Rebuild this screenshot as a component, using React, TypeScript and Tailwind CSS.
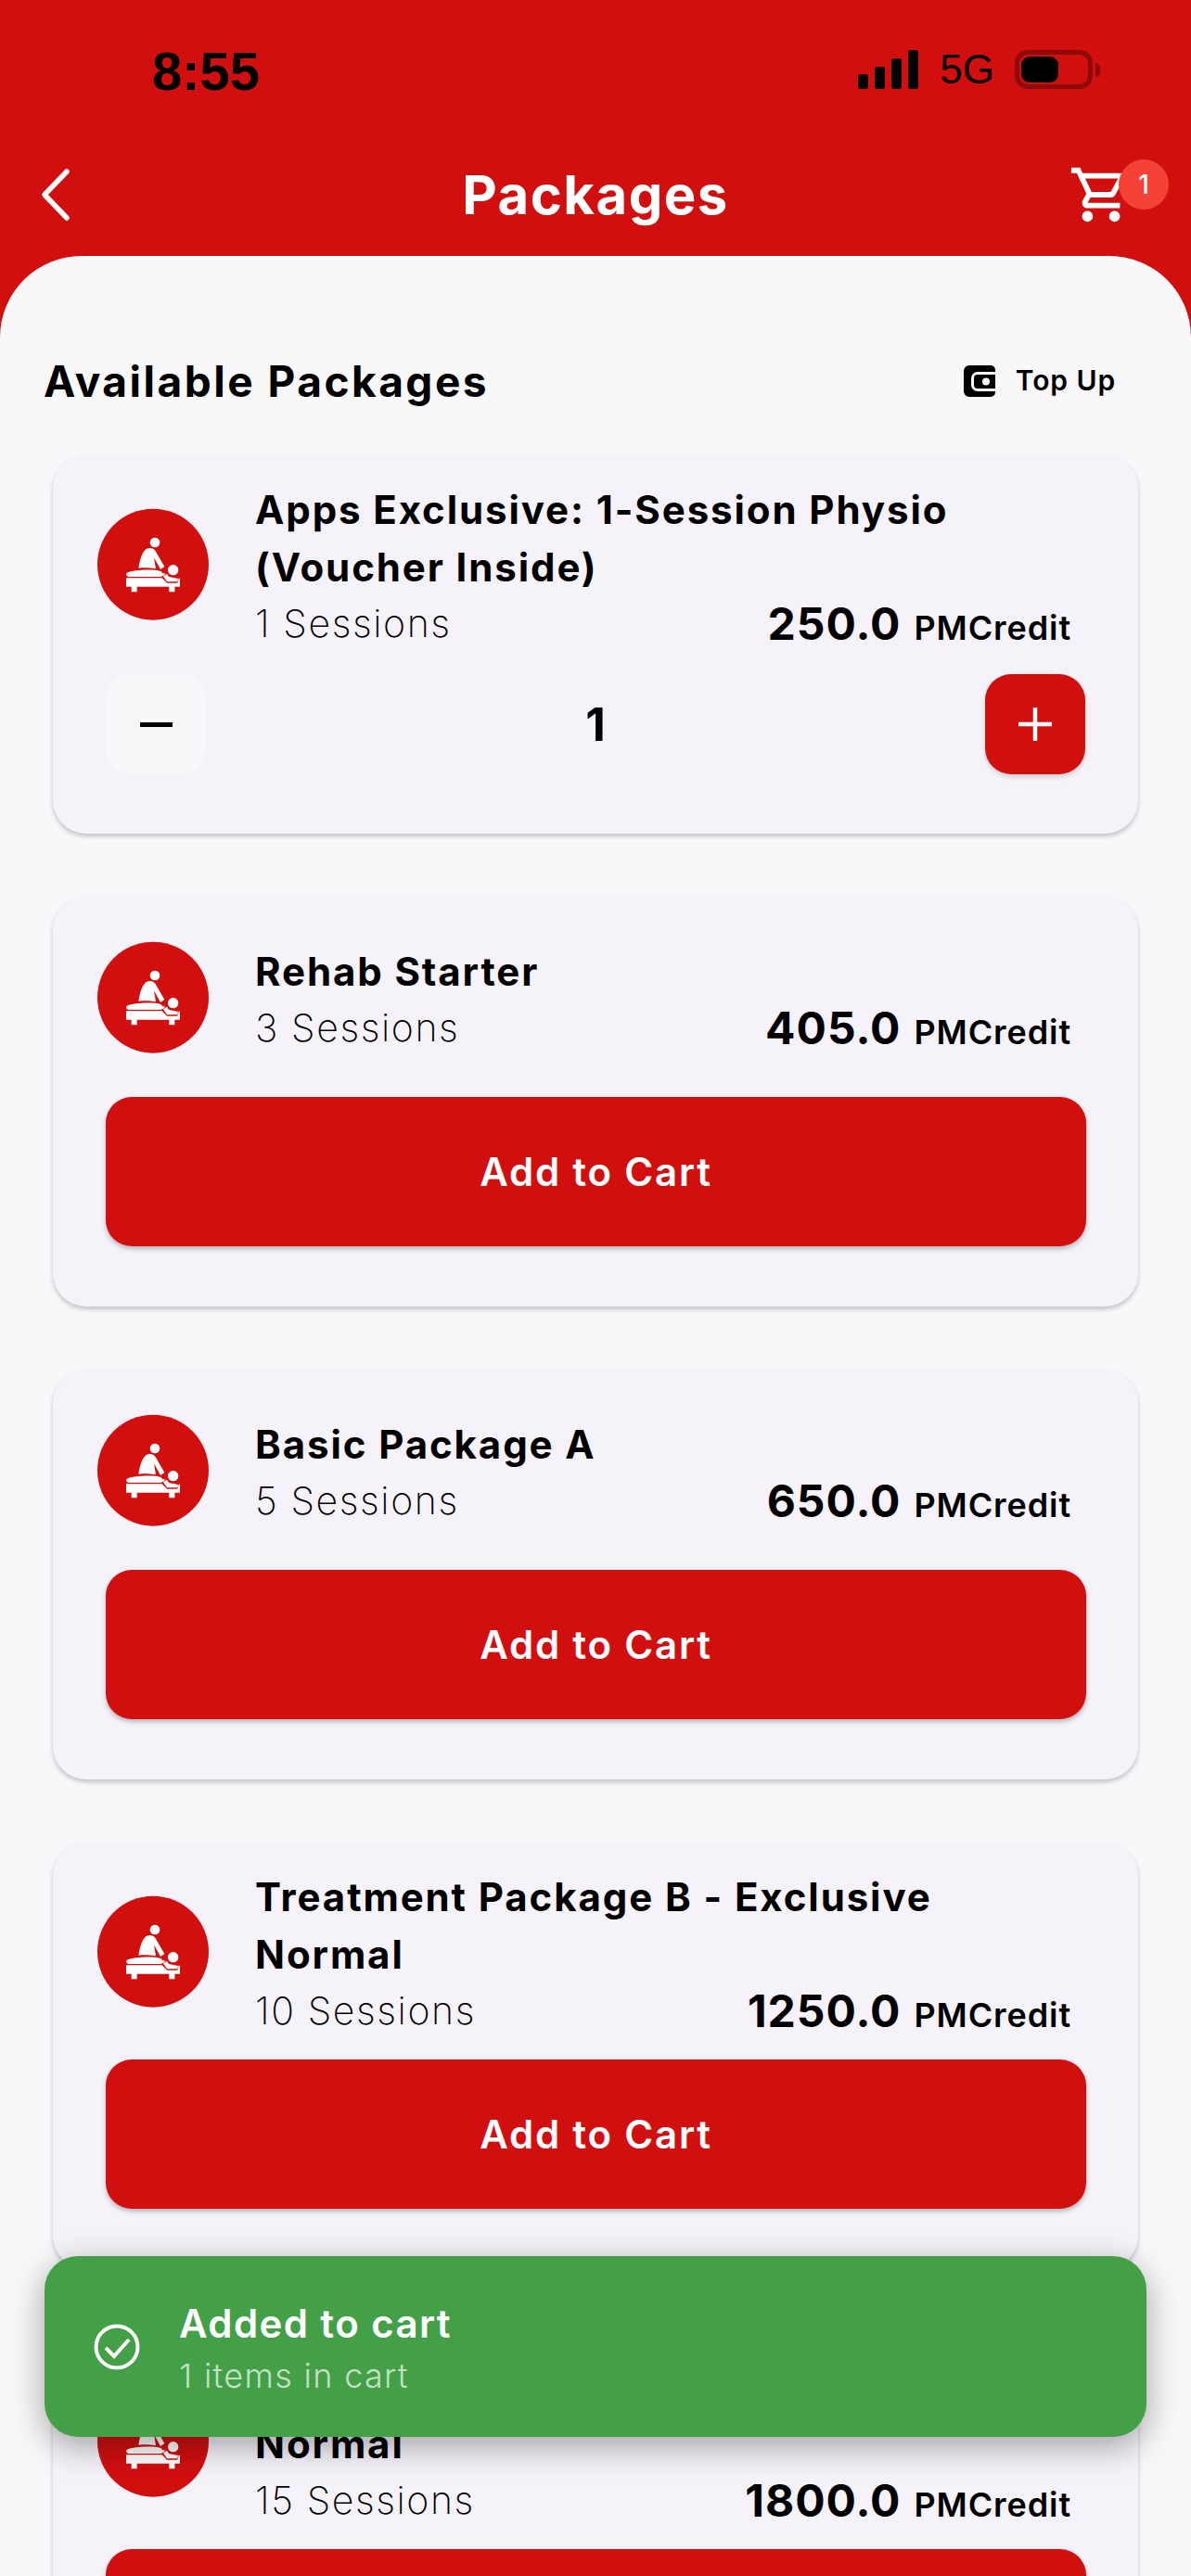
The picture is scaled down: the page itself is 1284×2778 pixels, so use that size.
import React from "react";

function MassageIcon() {
  return (
    <svg width="150" height="150" viewBox="0 0 450 450" className="-mx-[15px] -mt-[25px] -mb-[14px] shrink-0">
      <circle cx="225" cy="236" r="180" fill="#D20F0F" />
      <g fill="#fff">
        <circle cx="231" cy="165" r="16" />
        <path d="M178 248 C182 222 190 195 203 186 C215 181 226 183 233 193 L262 243 L249 252 L228 214 L234 250 C215 246 195 246 178 248Z" />
        <path d="M141 263 C160 255 200 252 238 255 L250 258 L258 266 L262 262 L262 270 L250 276 L150 276 C138 276 136 266 141 263Z" />
        <circle cx="290" cy="254" r="17" />
        <path d="M258 274 L270 266 L276 276 L306 282 L304 292 L270 292Z" />
        <path d="M138 280 L254 280 L270 296 L304 296 L308 281 L312 281 L312 308 L295 308 L295 325 L277 325 L277 308 L173 308 L173 325 L155 325 L155 308 L138 308Z" />
      </g>
    </svg>
  );
}

function Row({ title, sessions, price }: { title: React.ReactNode; sessions: string; price: string }) {
  return (
    <div className="flex items-center pl-[48px] pr-[72px]">
      <MassageIcon />
      <div className="ml-[50px] flex min-h-[164px] flex-1 flex-col justify-center">
        <div className="text-[42px] leading-[62px] font-bold tracking-[1.9px] text-black">{title}</div>
        <div className="flex h-[58px] items-center justify-between">
          <span className="text-[41px] leading-[58px] font-extralight tracking-[1.6px] text-black">{sessions}</span>
          <span className="flex items-baseline gap-[14px] pt-[5px] leading-[58px] text-black">
            <span className="text-[48px] font-bold tracking-[1px]">{price}</span>
            <span className="text-[36px] font-semibold tracking-[0.9px]">PMCredit</span>
          </span>
        </div>
      </div>
    </div>
  );
}

function AddButton() {
  return (
    <button className="mx-[57px] mt-[24px] flex h-[161px] w-[1057px] items-center justify-center rounded-[28px] bg-[#D20F0F] text-[42px] font-semibold tracking-[1.8px] text-white shadow-[0_3px_5px_rgba(0,0,0,0.25)]">
      Add to Cart
    </button>
  );
}

function Card({ title, sessions, price }: { title: React.ReactNode; sessions: string; price: string }) {
  return (
    <div className="mx-[57px] rounded-[36px] bg-[#F6F2FA] pt-[28px] pb-[65px] shadow-[0_3px_5px_rgba(0,0,0,0.22)]">
      <Row title={title} sessions={sessions} price={price} />
      <AddButton />
    </div>
  );
}

export default function App() {
  return (
    <div
      className="relative flex h-[2778px] w-[1284px] flex-col overflow-hidden bg-[#D20F0F]"
      style={{ fontFamily: 'Inter, "Liberation Sans", sans-serif' }}
    >
      {/* status bar */}
      <div className="flex h-[156px] items-start justify-between pt-[54px] pr-[106px] pl-[164px] text-black">
        <span className="text-[58px] leading-[46px] font-semibold" style={{ fontFamily: '"Liberation Sans", sans-serif' }}>
          8:55
        </span>
        <div className="flex items-center">
          <svg width="66" height="42" viewBox="0 0 66 42" fill="#000">
            <rect x="0" y="26" width="11" height="16" rx="3" />
            <rect x="18" y="18" width="11" height="24" rx="3" />
            <rect x="36" y="9" width="11" height="33" rx="3" />
            <rect x="54" y="0" width="11" height="42" rx="3" />
          </svg>
          <span className="mx-[22px] text-[44px] leading-[42px]" style={{ fontFamily: '"Liberation Sans", sans-serif' }}>
            5G
          </span>
          <div className="relative h-[42px] w-[84px] rounded-[14px] border-[5px] border-[#8F0A0A] p-[2px]">
            <div className="h-full w-[40px] rounded-[9px] bg-black" />
            <div className="absolute top-[9px] -right-[13px] h-[15px] w-[5px] rounded-r-full bg-[#8F0A0A]" />
          </div>
        </div>
      </div>

      {/* nav bar */}
      <div className="relative mb-[12px] flex h-[108px] items-center justify-between">
        <svg width="60" height="70" viewBox="0 0 60 70" fill="none" stroke="#fff" strokeWidth="5.5" strokeLinecap="round" strokeLinejoin="round" className="ml-[30px]">
          <path d="M42 10 L18 35 L42 60" />
        </svg>
        <span className="absolute left-0 w-[1284px] text-center text-[58px] font-bold tracking-[1.5px] text-white">Packages</span>
        <div className="relative mr-[62px] h-[70px] w-[70px]">
          <svg width="70" height="70" viewBox="0 0 24 24" fill="#fff">
            <path d="M15.55 13c.75 0 1.41-.41 1.75-1.03l3.58-6.49c.37-.66-.11-1.48-.87-1.48H5.21l-.94-2H1v2h2l3.6 7.59-1.35 2.44C4.52 15.37 5.48 17 7 17h12v-2H7l1.1-2h7.45zM6.16 6h12.15l-2.76 5H8.53L6.16 6zM7 18c-1.1 0-1.99.9-1.99 2S5.9 22 7 22s2-.9 2-2-.9-2-2-2zm10 0c-1.1 0-1.99.9-1.99 2s.89 2 1.99 2 2-.9 2-2-.9-2-2-2z" />
          </svg>
          <span className="absolute -top-[3px] left-[54px] flex h-[54px] w-[54px] items-center justify-center rounded-full bg-[#F44336] text-[28px] font-medium text-white">
            1
          </span>
        </div>
      </div>

      {/* panel */}
      <div className="flex-1 overflow-hidden rounded-t-[88px] bg-[#F8F8FB]">
        <div className="mt-[100px] flex h-[70px] items-center justify-between pr-[81px] pl-[47px]">
          <span className="text-[46px] font-bold tracking-[2.5px] text-black">Available Packages</span>
          <div className="flex items-center gap-[22px]">
            <svg width="34" height="34" viewBox="0 0 34 34">
              <path d="M6 0H29a5 5 0 0 1 5 5v2H15a7 7 0 0 0-7 7v7a7 7 0 0 0 7 7H34v1a5 5 0 0 1-5 5H6a6 6 0 0 1-6-6V6a6 6 0 0 1 6-6Z" fill="#000" />
              <path fillRule="evenodd" d="M15 10H34V25H15a4 4 0 0 1-4-4V14a4 4 0 0 1 4-4ZM24 13.500a4 4 0 1 0 0 8 4 4 0 0 0 0-8Z" fill="#000" />
            </svg>
            <span className="-mt-[2px] text-[30px] font-semibold tracking-[0.9px] text-black">Top Up</span>
          </div>
        </div>

        <div className="mt-[45px] flex flex-col gap-[68px]">
          {/* first card with stepper */}
          <div className="mx-[57px] h-[408px] rounded-[36px] bg-[#F6F2FA] pt-[28px] shadow-[0_3px_5px_rgba(0,0,0,0.22)]">
            <Row
              title={
                <>
                  Apps Exclusive: 1-Session Physio
                  <br />
                  (Voucher Inside)
                </>
              }
              sessions="1 Sessions"
              price="250.0"
            />
            <div className="mx-[57px] mt-[26px] flex items-center justify-between">
              <div className="flex h-[108px] w-[108px] items-center justify-center rounded-[28px] bg-[#F8F8FB]">
                <div className="h-[5px] w-[35px] bg-black" />
              </div>
              <span className="text-[50px] font-bold text-black">1</span>
              <div className="flex h-[108px] w-[108px] items-center justify-center rounded-[28px] bg-[#D20F0F] shadow-[0_3px_5px_rgba(0,0,0,0.15)]">
                <svg width="36" height="36" viewBox="0 0 36 36" stroke="#fff" strokeWidth="4.500">
                  <path d="M18 0V36M0 18H36" />
                </svg>
              </div>
            </div>
          </div>

          <Card title="Rehab Starter" sessions="3 Sessions" price="405.0" />
          <Card title="Basic Package A" sessions="5 Sessions" price="650.0" />
          <Card
            title={
              <>
                Treatment Package B - Exclusive
                <br />
                Normal
              </>
            }
            sessions="10 Sessions"
            price="1250.0"
          />
          <Card
            title={
              <>
                Treatment Package C - Exclusive
                <br />
                Normal
              </>
            }
            sessions="15 Sessions"
            price="1800.0"
          />
        </div>
      </div>

      {/* toast */}
      <div className="absolute top-[2433px] left-[48px] flex h-[195px] w-[1188px] items-center rounded-[36px] bg-[#43A047] pl-[53px] shadow-[0_10px_36px_rgba(0,0,0,0.35)]">
        <svg width="50" height="50" viewBox="0 0 50 50" fill="none" stroke="#fff" strokeWidth="4">
          <circle cx="25" cy="25" r="22.500" />
          <path d="M13 26 L22 35 L38 17" />
        </svg>
        <div className="ml-[42px] flex flex-col pt-[6px]">
          <span className="text-[42px] leading-[57px] font-semibold tracking-[1.4px] text-white">Added to cart</span>
          <span className="text-[36px] leading-[57px] font-light tracking-[1.3px] text-white/70">1 items in cart</span>
        </div>
      </div>
    </div>
  );
}
